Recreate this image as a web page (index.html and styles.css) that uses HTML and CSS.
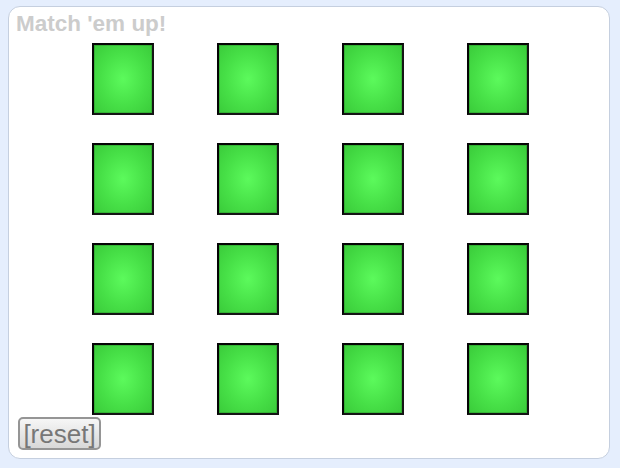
FILE: index.html
```html
<!DOCTYPE html>
<html>
<head>
<meta charset="utf-8">
<link rel="stylesheet" href="styles.css">
</head>
<body>
<div class="panel">
  <div class="title">Match 'em up!</div>
  <div class="grid">
    <div class="card"></div><div class="card"></div><div class="card"></div><div class="card"></div>
    <div class="card"></div><div class="card"></div><div class="card"></div><div class="card"></div>
    <div class="card"></div><div class="card"></div><div class="card"></div><div class="card"></div>
    <div class="card"></div><div class="card"></div><div class="card"></div><div class="card"></div>
  </div>
  <button class="reset">[reset]</button>
</div>
</body>
</html>
```
FILE: styles.css
```css
html, body {
  margin: 0;
  padding: 0;
  background: #e5eefd;
}
body {
  padding: 6px 0 0 8px;
  font-family: "Liberation Sans", Arial, sans-serif;
}
.panel {
  box-sizing: border-box;
  width: 602px;
  height: 453px;
  background: #fff;
  border: 1px solid #c5cfdf;
  border-radius: 12px;
  padding: 4px 0 0 7px;
}
.title {
  font-size: 22.5px;
  line-height: 26px;
  font-weight: bold;
  color: #cccccc;
}
.grid {
  margin: 6px 0 0 76px;
  display: grid;
  grid-template-columns: repeat(4, 62px);
  grid-auto-rows: 72px;
  column-gap: 63px;
  row-gap: 28px;
}
.card {
  box-sizing: border-box;
  border: 2px solid #050505;
  border-right-color: #151515;
  border-bottom-color: #151515;
  background: radial-gradient(ellipse at center, #5cfa5c 0%, #47e047 55%, #3acb3a 100%);
  box-shadow: inset 0 0 0 1px rgba(0, 0, 0, 0.15);
}
.reset {
  display: block;
  margin: 2px 0 0 2px;
  box-sizing: border-box;
  width: 83px;
  height: 33px;
  padding: 0;
  border: 2px solid #959595;
  border-radius: 5px;
  background: linear-gradient(#f6f6f6, #d8d8d8);
  font-family: "Liberation Sans", Arial, sans-serif;
  font-size: 26px;
  line-height: 28px;
  color: #777777;
  text-align: center;
}
```
